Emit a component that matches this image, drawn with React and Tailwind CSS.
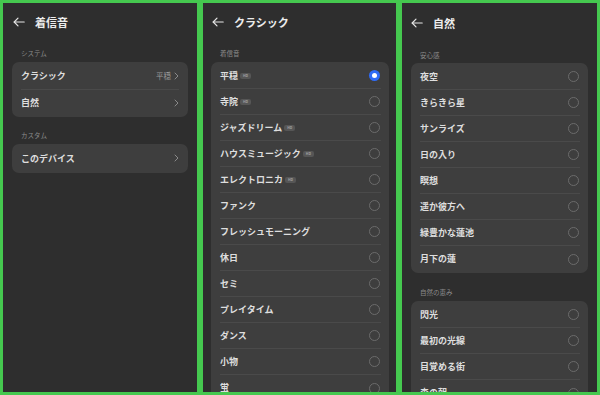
import React from 'react';

const BackArrow = () => (
    <svg width="12" height="10" viewBox="0 0 12 10" fill="none" stroke="#e6e6e6" strokeWidth="1.2" strokeLinecap="round" strokeLinejoin="round">
        <path d="M11.2 5H1.2" />
        <path d="M5 1.2L1.2 5L5 8.8" />
    </svg>
);

const Chevron = () => (
    <svg width="5" height="8" viewBox="0 0 5 8" fill="none" stroke="#8a8a8a" strokeWidth="1" strokeLinecap="round" strokeLinejoin="round">
        <path d="M1 1L4 4L1 7" />
    </svg>
);

const Radio = ({ checked }) =>
    checked ? (
        <span className="w-[11px] h-[11px] rounded-full bg-[#2f6bf5] flex items-center justify-center">
            <span className="block w-[5px] h-[5px] rounded-full bg-white"></span>
        </span>
    ) : (
        <span className="block w-[11px] h-[11px] rounded-full border border-[#6b6b6b]"></span>
    );

const Badge = () => (
    <span className="block ml-[2px] w-[11px] h-[6px] rounded-[2px] bg-[#565656] text-[3.5px] leading-[6px] text-[#a0a0a0] text-center font-bold">HD</span>
);

const Header = ({ title, arrowX, gap }) => (
    <div className={`h-[38px] flex items-center ${arrowX}`}>
        <BackArrow />
        <span className={`${gap} text-[11px] font-bold text-[#ececec] leading-none`}>{title}</span>
    </div>
);

const SectionLabel = ({ children, h, pt }) => (
    <div className={`${h} ${pt} pl-[9px] text-[6.5px] leading-[8px] text-[#8c8c8c]`}>{children}</div>
);

const Card = ({ children }) => (
    <div className="bg-[#3e3e3e] rounded-[7px] py-[1px] overflow-hidden">{children}</div>
);

const NavRow = ({ label, value, last }) => (
    <div className="h-[26.5px] px-[9px] flex items-center">
        <div className={`flex-1 h-full flex items-center justify-between ${last ? '' : 'border-b border-[#4a4a4a]'}`}>
            <span className="text-[9px] font-semibold text-[#dedede]">{label}</span>
            <span className="flex items-center gap-[3px]">
                {value && <span className="text-[7.5px] text-[#9a9a9a]">{value}</span>}
                <Chevron />
            </span>
        </div>
    </div>
);

const ToneRow = ({ label, badge, checked, last }) => (
    <div className="h-[26px] pl-[9px] pr-[8px]">
        <div className={`h-full flex items-center justify-between ${last ? '' : 'border-b border-[#4a4a4a]'}`}>
            <span className="flex items-center">
                <span className="text-[9px] font-semibold text-[#dedede]">{label}</span>
                {badge && <Badge />}
            </span>
            <span className="mr-[1px]"><Radio checked={checked} /></span>
        </div>
    </div>
);

const classic = [
    ['平穏', true], ['寺院', true], ['ジャズドリーム', true], ['ハウスミュージック', true],
    ['エレクトロニカ', true], ['ファンク'], ['フレッシュモーニング'], ['休日'], ['セミ'],
    ['プレイタイム'], ['ダンス'], ['小物'], ['蛍'],
];

const calm = ['夜空', 'きらきら星', 'サンライズ', '日の入り', '瞑想', '遥か彼方へ', '緑豊かな蓮池', '月下の蓮'];
const gifts = ['閃光', '最初の光線', '目覚める街', '森の朝'];

const Panel = ({ width, children }) => (
    <div className={`${width} h-[395px] shrink-0 border-[3px] border-[#45c84f] bg-[#2e2e2e] overflow-hidden`}>{children}</div>
);

export default function App() {
    return (
        <div className="w-[600px] h-[395px] flex bg-white font-['Noto_Sans_CJK_JP','Noto_Sans',sans-serif] overflow-hidden">
            {/* 着信音 */}
            <Panel width="w-[200px]">
                <Header title="着信音" arrowX="pl-[10px]" gap="ml-[10px]" />
                <div className="px-[9px]">
                    <SectionLabel h="h-[21px]" pt="pt-[8px]">システム</SectionLabel>
                    <Card>
                        <NavRow label="クラシック" value="平穏" />
                        <NavRow label="自然" last />
                    </Card>
                    <SectionLabel h="h-[27px]" pt="pt-[14px]">カスタム</SectionLabel>
                    <Card>
                        <NavRow label="このデバイス" last />
                    </Card>
                </div>
            </Panel>

            {/* クラシック */}
            <Panel width="w-[199px]">
                <Header title="クラシック" arrowX="pl-[9px]" gap="ml-[10px]" />
                <div className="pl-[8px] pr-[7px]">
                    <SectionLabel h="h-[21px]" pt="pt-[8px]">着信音</SectionLabel>
                    <Card>
                        {classic.map(([name, badge], i) => (
                            <ToneRow key={name} label={name} badge={badge} checked={i === 0} last={i === classic.length - 1} />
                        ))}
                    </Card>
                </div>
            </Panel>

            {/* 自然 */}
            <Panel width="w-[201px]">
                <div className="pt-[1px]">
                    <Header title="自然" arrowX="pl-[9px]" gap="ml-[10px]" />
                </div>
                <div className="px-[9px]">
                    <SectionLabel h="h-[21px]" pt="pt-[9px]">安心感</SectionLabel>
                    <Card>
                        {calm.map((name, i) => (
                            <ToneRow key={name} label={name} last={i === calm.length - 1} />
                        ))}
                    </Card>
                    <SectionLabel h="h-[28px]" pt="pt-[15px]">自然の恵み</SectionLabel>
                    <Card>
                        {gifts.map((name, i) => (
                            <ToneRow key={name} label={name} last={i === gifts.length - 1} />
                        ))}
                    </Card>
                </div>
            </Panel>
        </div>
    );
}
